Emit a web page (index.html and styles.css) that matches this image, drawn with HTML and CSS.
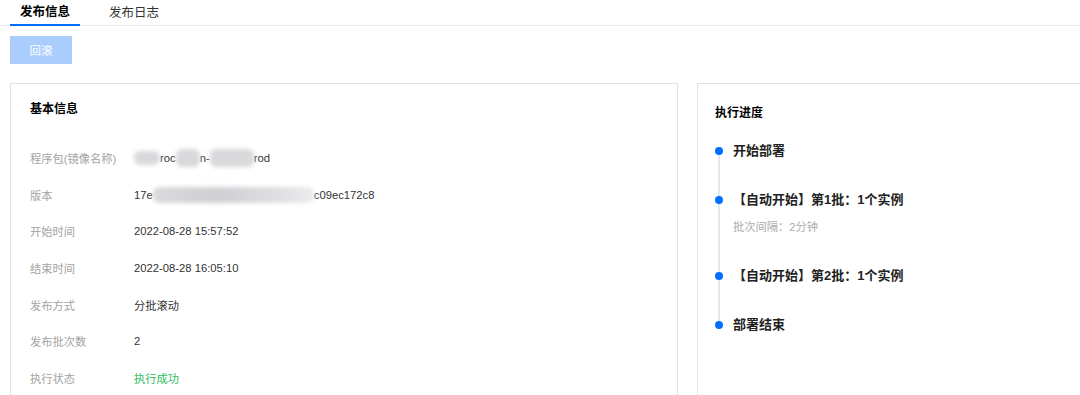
FILE: index.html
```html
<!DOCTYPE html>
<html lang="zh-CN">
<head>
    <meta charset="UTF-8">
    <meta name="viewport" content="width=device-width, initial-scale=1.0">
    <title>发布信息</title>
    <link rel="stylesheet" href="styles.css">
</head>
<body>
    <nav class="tabs">
        <a class="tab active" href="#info">发布信息</a>
        <a class="tab" href="#log">发布日志</a>
    </nav>

    <div class="page">
        <button class="btn-rollback" disabled>回滚</button>

        <div class="cards">
            <section class="card">
                <h2 class="card-title">基本信息</h2>
                <dl class="info-list">
                    <div class="info-row">
                        <dt>程序包(镜像名称)</dt>
                        <dd><span class="blur b-a"></span>roc<span class="blur b-b"></span>n-<span class="blur b-c"></span>rod</dd>
                    </div>
                    <div class="info-row">
                        <dt>版本</dt>
                        <dd>17e<span class="blur b-long"></span>c09ec172c8</dd>
                    </div>
                    <div class="info-row">
                        <dt>开始时间</dt>
                        <dd>2022-08-28 15:57:52</dd>
                    </div>
                    <div class="info-row">
                        <dt>结束时间</dt>
                        <dd>2022-08-28 16:05:10</dd>
                    </div>
                    <div class="info-row">
                        <dt>发布方式</dt>
                        <dd>分批滚动</dd>
                    </div>
                    <div class="info-row">
                        <dt>发布批次数</dt>
                        <dd>2</dd>
                    </div>
                    <div class="info-row">
                        <dt>执行状态</dt>
                        <dd class="success">执行成功</dd>
                    </div>
                </dl>
            </section>

            <section class="card card-progress">
                <h2 class="card-title">执行进度</h2>
                <ul class="timeline">
                    <li class="step">
                        <div class="step-title">开始部署</div>
                    </li>
                    <li class="step">
                        <div class="step-title">【自动开始】第1批：1个实例</div>
                        <div class="step-note">批次间隔：2分钟</div>
                    </li>
                    <li class="step">
                        <div class="step-title">【自动开始】第2批：1个实例</div>
                    </li>
                    <li class="step">
                        <div class="step-title">部署结束</div>
                    </li>
                </ul>
            </section>
        </div>
    </div>
</body>
</html>
```

FILE: styles.css
```css
body {
    margin: 0;
    font-family: "Liberation Sans", Arial, "Noto Sans CJK SC", sans-serif;
    font-size: 11.25px;
    color: #333;
    background: #fff;
    overflow: hidden;
}

.tabs {
    display: flex;
    height: 26px;
    padding-left: 10px;
    border-bottom: 1px solid #e8eaef;
    box-sizing: border-box;
}

.tab {
    display: block;
    height: 26px;
    padding: 0 10px;
    margin-right: 19px;
    line-height: 26px;
    font-size: 12.5px;
    color: #333;
    text-decoration: none;
    box-sizing: border-box;
}

.tab.active {
    font-weight: bold;
    color: #000;
    border-bottom: 2px solid #006eff;
    line-height: 25px;
}

.page {
    padding: 10px 10px 0;
}

.btn-rollback {
    display: block;
    width: 62px;
    height: 28px;
    border: 0;
    padding: 0;
    background: #abcdfd;
    color: #fff;
    font-family: inherit;
    font-size: 11.5px;
}

.cards {
    display: grid;
    grid-template-columns: 668px 668px;
    gap: 19px;
    margin-top: 19px;
}

.card {
    border: 1px solid #dfe2e8;
    padding: 15px 19px;
    min-height: 320px;
}

.card-title {
    margin: 0;
    font-size: 12px;
    line-height: 20px;
    color: #000;
}

.info-list {
    margin: 21px 0 0;
}

.info-row {
    display: flex;
    align-items: center;
    height: 36.6px;
}

.info-row dt {
    width: 104px;
    color: #a3a3a3;
}

.info-row dd {
    margin: 0;
    display: flex;
    align-items: center;
    color: #333;
}

.info-row dd.success {
    color: #2dbe60;
}

.blur {
    display: inline-block;
    height: 14px;
    background: #d9d9dc;
    filter: blur(2px);
    border-radius: 6px;
}

.b-a { width: 26px; }
.b-b { width: 24px; height: 18px; }
.b-c { width: 44px; height: 18px; }
.b-long {
    width: 161px;
    height: 16px;
    background: linear-gradient(90deg, #dadadd, #cfcfd3 40%, #e0e0e3 80%, #ececee);
}

.card-progress {
    padding: 19px 17px;
}

.timeline {
    list-style: none;
    margin: 18px 0 0;
    padding: 0;
}

.step {
    position: relative;
    padding: 0 0 29px 18px;
}

.step::before {
    content: "";
    position: absolute;
    left: 0;
    top: 6px;
    width: 8px;
    height: 8px;
    border-radius: 50%;
    background: #006eff;
}

.step::after {
    content: "";
    position: absolute;
    left: 3px;
    top: 14px;
    bottom: -6px;
    width: 2px;
    background: #e3e6ec;
}

.step:last-child::after {
    display: none;
}

.step-title {
    font-size: 13px;
    line-height: 20px;
    font-weight: bold;
    color: #222;
}

.step-note {
    margin-top: 7px;
    line-height: 20px;
    color: #aaa;
}
```
